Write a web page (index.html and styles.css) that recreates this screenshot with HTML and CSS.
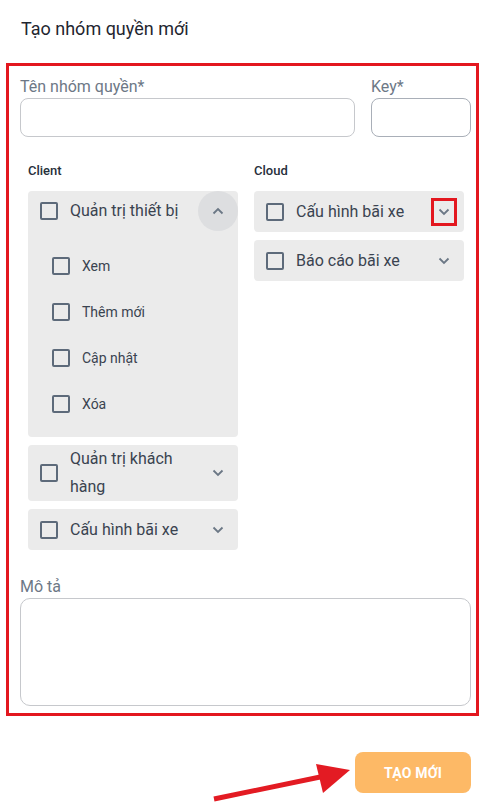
FILE: index.html
```html
<!DOCTYPE html>
<html lang="vi">
<head>
<meta charset="utf-8">
<link rel="stylesheet" href="styles.css">
</head>
<body>
<div class="page">
  <h1 class="title">Tạo nhóm quyền mới</h1>
  <div class="frame">
    <div class="row">
      <div class="field name">
        <label class="label">Tên nhóm quyền*</label>
        <div class="input"></div>
      </div>
      <div class="field key">
        <label class="label">Key*</label>
        <div class="input"></div>
      </div>
    </div>
    <div class="groups">
      <div class="col">
        <div class="group-title">Client</div>
        <div class="acc open">
          <div class="acc-head">
            <span class="cb"></span>
            <span class="acc-text">Quản trị thiết bị</span>
            <span class="chev round"><svg width="12" height="8" viewBox="0 0 12 8"><polyline points="1.5,6.5 6,2 10.5,6.5" fill="none" stroke="#6b7785" stroke-width="1.8"/></svg></span>
          </div>
          <div class="subs">
            <div class="sub"><span class="cb"></span><span>Xem</span></div>
            <div class="sub"><span class="cb"></span><span>Thêm mới</span></div>
            <div class="sub"><span class="cb"></span><span>Cập nhật</span></div>
            <div class="sub"><span class="cb"></span><span>Xóa</span></div>
          </div>
        </div>
        <div class="acc">
          <div class="acc-head">
            <span class="cb"></span>
            <span class="acc-text">Quản trị khách hàng</span>
            <span class="chev"><svg width="12" height="8" viewBox="0 0 12 8"><polyline points="1.5,1.5 6,6 10.5,1.5" fill="none" stroke="#6b7785" stroke-width="1.8"/></svg></span>
          </div>
        </div>
        <div class="acc">
          <div class="acc-head">
            <span class="cb"></span>
            <span class="acc-text">Cấu hình bãi xe</span>
            <span class="chev"><svg width="12" height="8" viewBox="0 0 12 8"><polyline points="1.5,1.5 6,6 10.5,1.5" fill="none" stroke="#6b7785" stroke-width="1.8"/></svg></span>
          </div>
        </div>
      </div>
      <div class="col">
        <div class="group-title">Cloud</div>
        <div class="acc">
          <div class="acc-head">
            <span class="cb"></span>
            <span class="acc-text">Cấu hình bãi xe</span>
            <span class="chev"><svg width="12" height="8" viewBox="0 0 12 8"><polyline points="1.5,1.5 6,6 10.5,1.5" fill="none" stroke="#6b7785" stroke-width="1.8"/></svg><span class="mark"></span></span>
          </div>
        </div>
        <div class="acc">
          <div class="acc-head">
            <span class="cb"></span>
            <span class="acc-text">Báo cáo bãi xe</span>
            <span class="chev"><svg width="12" height="8" viewBox="0 0 12 8"><polyline points="1.5,1.5 6,6 10.5,1.5" fill="none" stroke="#6b7785" stroke-width="1.8"/></svg></span>
          </div>
        </div>
      </div>
    </div>
    <div class="field desc">
      <label class="label">Mô tả</label>
      <div class="textarea"></div>
    </div>
  </div>
  <div class="actions">
    <button class="btn">TẠO MỚI</button>
  </div>
  <svg class="arrow" width="492" height="810" viewBox="0 0 492 810">
    <line x1="214" y1="799" x2="325" y2="776" stroke="#e31b23" stroke-width="5"/>
    <polygon points="350,770 316,764 323,793" fill="#e31b23"/>
  </svg>
</div>
</body>
</html>
```
FILE: styles.css
```css
* { box-sizing: border-box; }
html, body { margin: 0; padding: 0; background: #fff; }
body { font-family: Roboto, "Noto Sans", sans-serif; color: #2b3440; }
.page { position: relative; width: 492px; height: 810px; }
.title {
  margin: 0;
  padding: 17px 21px 0;
  font-size: 18px;
  font-weight: 400;
  line-height: 24px;
  color: #1f2630;
}
.frame {
  margin: 22px 13px 0 6px;
  border: 3px solid #e3171f;
  padding: 10px 5px 7px 11px;
}
.row { display: flex; gap: 16px; }
.field { display: flex; flex-direction: column; }
.name { width: 335px; }
.key { width: 100px; }
.label {
  font-size: 16px;
  line-height: 22px;
  color: #6d7886;
}
.input {
  height: 39px;
  border: 1px solid #c6c8cc;
  border-radius: 8px;
  background: #fff;
}
.key .input { border-color: #a9afb8; }
.groups {
  display: grid;
  grid-template-columns: 210px 210px;
  gap: 16px;
  padding: 0 8px;
  margin-top: 24px;
}
.group-title {
  font-size: 13px;
  font-weight: 500;
  line-height: 20px;
  margin-bottom: 10px;
  color: #27303b;
}
.acc {
  background: #ebebeb;
  border-radius: 4px;
  margin-bottom: 8px;
}
.acc-head {
  display: flex;
  align-items: center;
  min-height: 41px;
  padding-left: 12px;
}
.open .acc-head { min-height: 40px; }
.cb {
  flex: 0 0 18px;
  width: 18px;
  height: 18px;
  border: 2px solid #5d6a7a;
  border-radius: 2px;
  margin-right: 12px;
}
.acc-text {
  flex: 1;
  font-size: 16px;
  line-height: 28px;
  color: #3a4350;
}
.chev {
  position: relative;
  flex: 0 0 40px;
  width: 40px;
  height: 40px;
  display: flex;
  align-items: center;
  justify-content: center;
}
.chev svg { display: block; margin-left: -1px; }
.chev.round { background: #dddee0; border-radius: 50%; }
.mark {
  position: absolute;
  left: 7px;
  top: 6px;
  width: 26px;
  height: 28px;
  border: 3px solid #e3171f;
}
.subs { padding: 12px 0 10px 24px; }
.sub {
  display: flex;
  align-items: center;
  height: 46px;
  font-size: 14px;
  color: #3a4350;
}
.desc { margin-top: 18px; }
.textarea {
  height: 108px;
  border: 1px solid #c6c8cc;
  border-radius: 10px;
}
.actions {
  display: flex;
  justify-content: flex-end;
  padding: 36px 21px 0;
}
.btn {
  width: 116px;
  height: 41px;
  border: 0;
  border-radius: 8px;
  background: #fdb966;
  color: #fff;
  font-family: Roboto, sans-serif;
  font-size: 14px;
  font-weight: 700;
  letter-spacing: 0.2px;
}
.arrow { position: absolute; left: 0; top: 0; pointer-events: none; }
```
